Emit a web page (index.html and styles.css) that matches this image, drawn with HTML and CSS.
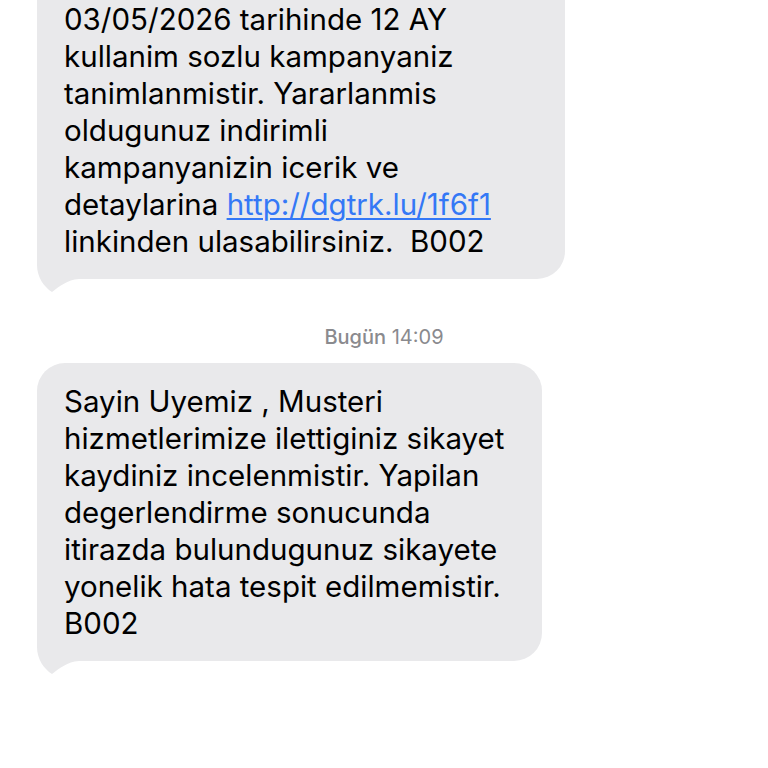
FILE: index.html
```html
<!DOCTYPE html>
<html lang="tr">
<head>
<meta charset="utf-8">
<link rel="stylesheet" href="styles.css">
</head>
<body>
<main class="thread">
  <div class="bubble bubble-first">
    <p class="msg">Sayin Uyemiz, hattiniza<br>03/05/2026 tarihinde 12 AY<br>kullanim sozlu kampanyaniz<br>tanimlanmistir. Yararlanmis<br>oldugunuz indirimli<br>kampanyanizin icerik ve<br>detaylarina <a class="link" href="#">http://dgtrk.lu/1f6f1</a><br>linkinden ulasabilirsiniz.&nbsp; B002</p>
    <svg class="tail" width="50" height="45" viewBox="0 0 50 45"><path d="M0 0 L0 18 C0 30 7 40 15 45 C23 39 30 33 42 32 L42 0 Z"/></svg>
  </div>
  <div class="stamp"><span class="stamp-day">Bugün</span> 14:09</div>
  <div class="bubble bubble-second">
    <p class="msg">Sayin Uyemiz , Musteri<br>hizmetlerimize ilettiginiz sikayet<br>kaydiniz incelenmistir. Yapilan<br>degerlendirme sonucunda<br>itirazda bulundugunuz sikayete<br>yonelik hata tespit edilmemistir.<br>B002</p>
    <svg class="tail" width="50" height="45" viewBox="0 0 50 45"><path d="M0 0 L0 18 C0 30 7 40 15 45 C23 39 30 33 42 32 L42 0 Z"/></svg>
  </div>
</main>
</body>
</html>
```
FILE: styles.css
```css
html, body {
  margin: 0;
  padding: 0;
  background: #ffffff;
  width: 768px;
  height: 768px;
  overflow: hidden;
}
.thread {
  display: flex;
  flex-direction: column;
  align-items: flex-start;
  margin-top: -56px;
  padding-left: 37px;
}
.bubble {
  position: relative;
  box-sizing: border-box;
  background: #e9e9eb;
  border-radius: 28px;
  padding: 20px 20px 19px 27px;
}
.bubble-first { width: 528px; }
.bubble-second { width: 505px; }
.msg {
  margin: 0;
  font-family: Inter, "Noto Sans", sans-serif;
  font-size: 29.5px;
  line-height: 37px;
  letter-spacing: 0;
  color: #000000;
  white-space: nowrap;
  position: relative;
  z-index: 1;
}
.link {
  color: #3478f6;
  text-decoration: underline;
  text-underline-offset: 3px;
  text-decoration-thickness: 1.5px;
}
.tail {
  position: absolute;
  left: 0;
  bottom: -13px;
  fill: #e9e9eb;
}
.stamp {
  align-self: stretch;
  margin-left: -37px;
  text-align: center;
  font-family: Inter, "Noto Sans", sans-serif;
  font-size: 20px;
  color: #8a8a8e;
  line-height: 24px;
  padding: 46px 0 14px;
}
.stamp-day { font-weight: 500; }
```
